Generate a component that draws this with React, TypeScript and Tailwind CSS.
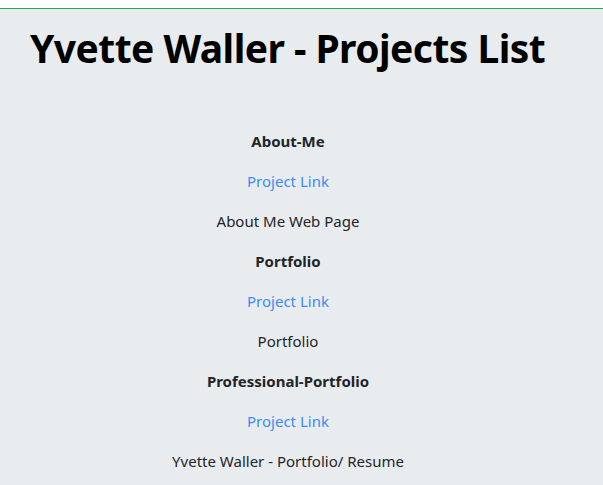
const projects = [
  { name: "About-Me", desc: "About Me Web Page" },
  { name: "Portfolio", desc: "Portfolio" },
  { name: "Professional-Portfolio", desc: "Yvette Waller - Portfolio/ Resume" },
];

export default function App() {
  return (
    <div className="min-h-screen bg-white pt-2 font-['Noto_Sans','Open_Sans',sans-serif] text-[#212529]">
      <div className="min-h-[477px] border-t border-[#28a745] bg-[#e9ecef]">
        <h1 className="px-[30px] pt-[15px] text-[39px] font-bold leading-[48px] tracking-[-0.55px] text-black">
          Yvette Waller - Projects List
        </h1>
        <ul className="mt-[57px] flex w-[576px] flex-col items-center gap-4 text-[15px] leading-6">
          {projects.map((p) => (
            <li key={p.name} className="contents">
              <h3 className="font-bold">{p.name}</h3>
              <a href="#" className="text-[#3b8cf7]">
                Project Link
              </a>
              <p>{p.desc}</p>
            </li>
          ))}
        </ul>
      </div>
    </div>
  );
}
